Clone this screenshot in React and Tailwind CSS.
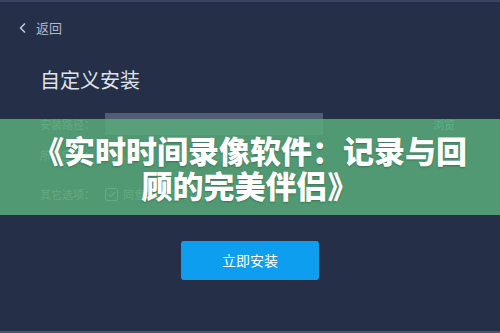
import React from "react";

const Row = ({ label, children, className = "" }) => (
  <div className={`flex items-center pl-[40px] text-[11px] text-[#9aa2b4] ${className}`}>
    <span className="w-[65px] shrink-0">{label}</span>
    {children}
  </div>
);

export default function App() {
  return (
    <div className="relative h-[333px] w-[500px] overflow-hidden border-t-2 border-b-2 border-t-[#3a4460] border-b-[#4d5870] bg-[#252f48] font-['Noto_Sans_CJK_SC','Noto_Sans',sans-serif]">
      {/* header */}
      <div className="flex h-[52px] items-center gap-[8px] pl-[18px] text-[13px] text-[#b3b9c8]">
        <svg width="10" height="12" viewBox="0 0 10 12" fill="none">
          <path d="M7 1.5L2.5 6L7 10.5" stroke="#c5cad6" strokeWidth="1.5" />
        </svg>
        <span>返回</span>
      </div>

      <div className="mt-[13px] pl-[40px] text-[20px] leading-[26px] text-[#dfe3ea]">自定义安装</div>

      {/* form */}
      <Row label="安装路径：" className="mt-[20px] h-[22px]">
        <div className="h-[22px] w-[218px] bg-[#525c76]" />
        <span className="ml-auto mr-[45px] text-[#7cc0ee]">浏览</span>
      </Row>
      <Row label="所需空间：" className="mt-[10px] h-[20px]">
        <span>356.1MB</span>
        <span className="ml-[30px]">可用空间：</span>
        <span className="ml-[6px]">58.2GB</span>
      </Row>
      <Row label="其它选项：" className="mt-[18px] h-[22px]">
        <span className="flex h-[13px] w-[13px] items-center justify-center rounded-[2px] border border-[#a3abbc]">
          <svg width="9" height="9" viewBox="0 0 9 9" fill="none">
            <path d="M1.5 4.5L3.7 6.7L7.8 1.8" stroke="#a3abbc" strokeWidth="1.2" />
          </svg>
        </span>
        <span className="ml-[5px]">同意软件许可协议</span>
      </Row>

      <div className="mt-[36px] flex justify-center">
        <button className="h-[39px] w-[138px] rounded-[3px] bg-[#0d9ef0] text-[14px] text-white">立即安装</button>
      </div>

      {/* overlay caption */}
      <div className="absolute left-0 right-0 top-[117px] flex h-[96px] flex-col items-center justify-center bg-[#58ab79]/[0.86] text-[31px] font-black leading-[35px] text-white [text-shadow:0_1px_2px_rgba(0,0,0,0.25)]">
        <div>《实时时间录像软件：记录与回</div>
        <div>顾的完美伴侣》</div>
      </div>
    </div>
  );
}
